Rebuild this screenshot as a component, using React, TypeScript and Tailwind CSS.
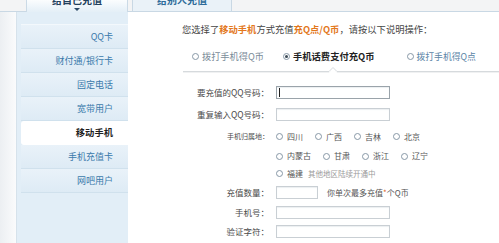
import type { ReactNode } from "react";

// 充值页 — 左侧充值方式菜单 + 移动手机话费充值表单

const FONT = "font-[Noto_Sans_CJK_SC,Liberation_Sans,sans-serif]";

const MENU = ["QQ卡", "财付通/银行卡", "固定电话", "宽带用户", "移动手机", "手机充值卡", "网吧用户"];
const ACTIVE = "移动手机";

function Radio({ checked = false }: { checked?: boolean }) {
  return (
    <span className="flex h-[7px] w-[7px] shrink-0 items-center justify-center rounded-full border border-[#8798a6] bg-white">
      {checked && <span className="h-[3px] w-[3px] rounded-full bg-[#3b4a55]" />}
    </span>
  );
}

function Field({
  label,
  height,
  labelClass = "text-[8.5px]",
  children,
}: {
  label: string;
  height: string;
  labelClass?: string;
  children: ReactNode;
}) {
  return (
    <div className={`flex items-center ${height}`}>
      <div className={`w-[142px] shrink-0 pr-[1px] text-right leading-none text-[#4a4a4a] ${labelClass}`}>
        {label}
      </div>
      <div className="ml-[6px] flex items-center">{children}</div>
    </div>
  );
}

function TextBox({ width = "w-[114px]", caret = false }: { width?: string; caret?: boolean }) {
  return (
    <div
      className={`flex h-[13px] items-center border bg-white shadow-[inset_0_1px_1px_#eceff1] ${width} ${
        caret ? "border-[#9aa3aa]" : "border-[#c9cfd4]"
      }`}
    >
      {caret && <span className="ml-[2px] h-[9px] w-px bg-[#222]" />}
    </div>
  );
}

function Region({ name }: { name: string }) {
  return (
    <span className="flex items-center">
      <Radio />
      <span className="ml-[4px] text-[8px] leading-none text-[#555]">{name}</span>
    </span>
  );
}

export default function App() {
  return (
    <div className={`flex h-[243px] w-[499px] flex-col overflow-hidden bg-white ${FONT}`}>
      {/* 顶部标签（文字上半被截掉，与原图一致） */}
      <div className="flex h-[12px] shrink-0 items-start border-b border-[#c9d8e4] bg-[#f3f4f5]">
        <div className="w-[26px]" />
        <div className="relative flex h-[12px] w-[102px] flex-col items-center overflow-hidden border-x border-[#cbdae6] bg-gradient-to-b from-[#fbfdfe] to-[#e4eff7]">
          <span className="-mt-[5px] text-[10px] font-bold leading-[10px] text-[#22405c]">给自己充值</span>
          <span className="mt-[3px] h-0 w-0 border-x-[3px] border-t-[3px] border-x-transparent border-t-[#2c4b68]" />
        </div>
        <div className="w-[4px]" />
        <div className="flex h-[11px] w-[100px] justify-center overflow-hidden border-x border-[#c9d8e4] bg-[#eaf2f8]">
          <span className="-mt-[5px] text-[10px] font-bold leading-[10px] text-[#2d6b99]">给别人充值</span>
        </div>
      </div>

      <div className="flex flex-1">
        {/* 左侧留白 */}
        <div className="w-[17px] shrink-0 border-r border-[#d6e2eb] bg-gradient-to-r from-[#eceff2] to-[#fafbfc]" />

        {/* 菜单 */}
        <div className="w-[111px] shrink-0 bg-[#e2eef7] pl-[4px] pt-[12px]">
          <div className="border-t border-[#f3f8fc]">
            {MENU.map((item) =>
              item === ACTIVE ? (
                <div
                  key={item}
                  className="flex h-[24px] items-center justify-end rounded-l-[3px] bg-white pr-[15px] text-[9.3px] font-bold leading-none text-[#1f1f1f]"
                >
                  {item}
                </div>
              ) : (
                <div
                  key={item}
                  className="flex h-[24px] items-center justify-end border-b border-[#d0e1ed] bg-gradient-to-b from-[#e9f2f9] to-[#deebf5] pr-[15px] text-[9px] leading-none text-[#3a7aab]"
                >
                  {item}
                </div>
              ),
            )}
          </div>
        </div>

        {/* 内容 */}
        <div className="flex-1">
          <div className="flex h-[36px] items-center pl-[54px] text-[9.3px] leading-none text-[#454545]">
            您选择了
            <b className="text-[#e3781d]">移动手机</b>
            方式充值
            <b className="text-[#e3781d]">充Q点/Q币</b>
            ，请按以下说明操作：
          </div>

          <div className="flex h-[18px] items-center pl-[64px] text-[9.2px] leading-none">
            <span className="flex items-center gap-[3px] text-[#7a8b98]">
              <Radio />
              拨打手机得Q币
            </span>
            <span className="ml-[19px] flex items-center gap-[3px] text-[9.3px] font-bold text-[#222]">
              <Radio checked />
              手机话费支付充Q币
            </span>
            <span className="ml-[32px] flex items-center gap-[3px] text-[8.8px] text-[#5b84a6]">
              <Radio />
              拨打手机得Q点
            </span>
          </div>

          <svg className="ml-[55px] mt-[1px] block" width="316" height="6" viewBox="0 0 316 6">
            <path d="M0 5.5 H146 L150 1.5 L154 5.5 H316" fill="none" stroke="#f0f1f2" />
            <path d="M0 4.5 H146 L150 0.5 L154 4.5 H316" fill="white" stroke="#d6dadd" />
          </svg>

          <div className="mt-[9px]">
            <Field label="要充值的QQ号码：" height="h-[20px]">
              <TextBox caret />
            </Field>
            <Field label="重复输入QQ号码：" height="h-[24px]">
              <TextBox />
            </Field>
            <Field label="手机归属地：" height="h-[21px]" labelClass="text-[7px]">
              <div className="flex gap-[12px]">
                <Region name="四川" />
                <Region name="广西" />
                <Region name="吉林" />
                <Region name="北京" />
              </div>
            </Field>
            <Field label="" height="h-[18px]">
              <div className="flex gap-[12px]">
                <Region name="内蒙古" />
                <Region name="甘肃" />
                <Region name="浙江" />
                <Region name="辽宁" />
              </div>
            </Field>
            <Field label="" height="h-[17px]">
              <Region name="福建" />
              <span className="ml-[5px] text-[7.5px] leading-none text-[#9a9a9a]">其他地区陆续开通中</span>
            </Field>
            <Field label="充值数量：" height="h-[21px]">
              <TextBox width="w-[42px]" />
              <span className="ml-[9px] text-[8px] leading-none text-[#555]">
                你单次最多充值<span className="text-[#e0662a]">*</span>个Q币
              </span>
            </Field>
            <Field label="手机号：" height="h-[18px]">
              <TextBox />
            </Field>
            <Field label="验证字符：" height="h-[20px]">
              <TextBox />
            </Field>
          </div>
        </div>
      </div>
    </div>
  );
}
